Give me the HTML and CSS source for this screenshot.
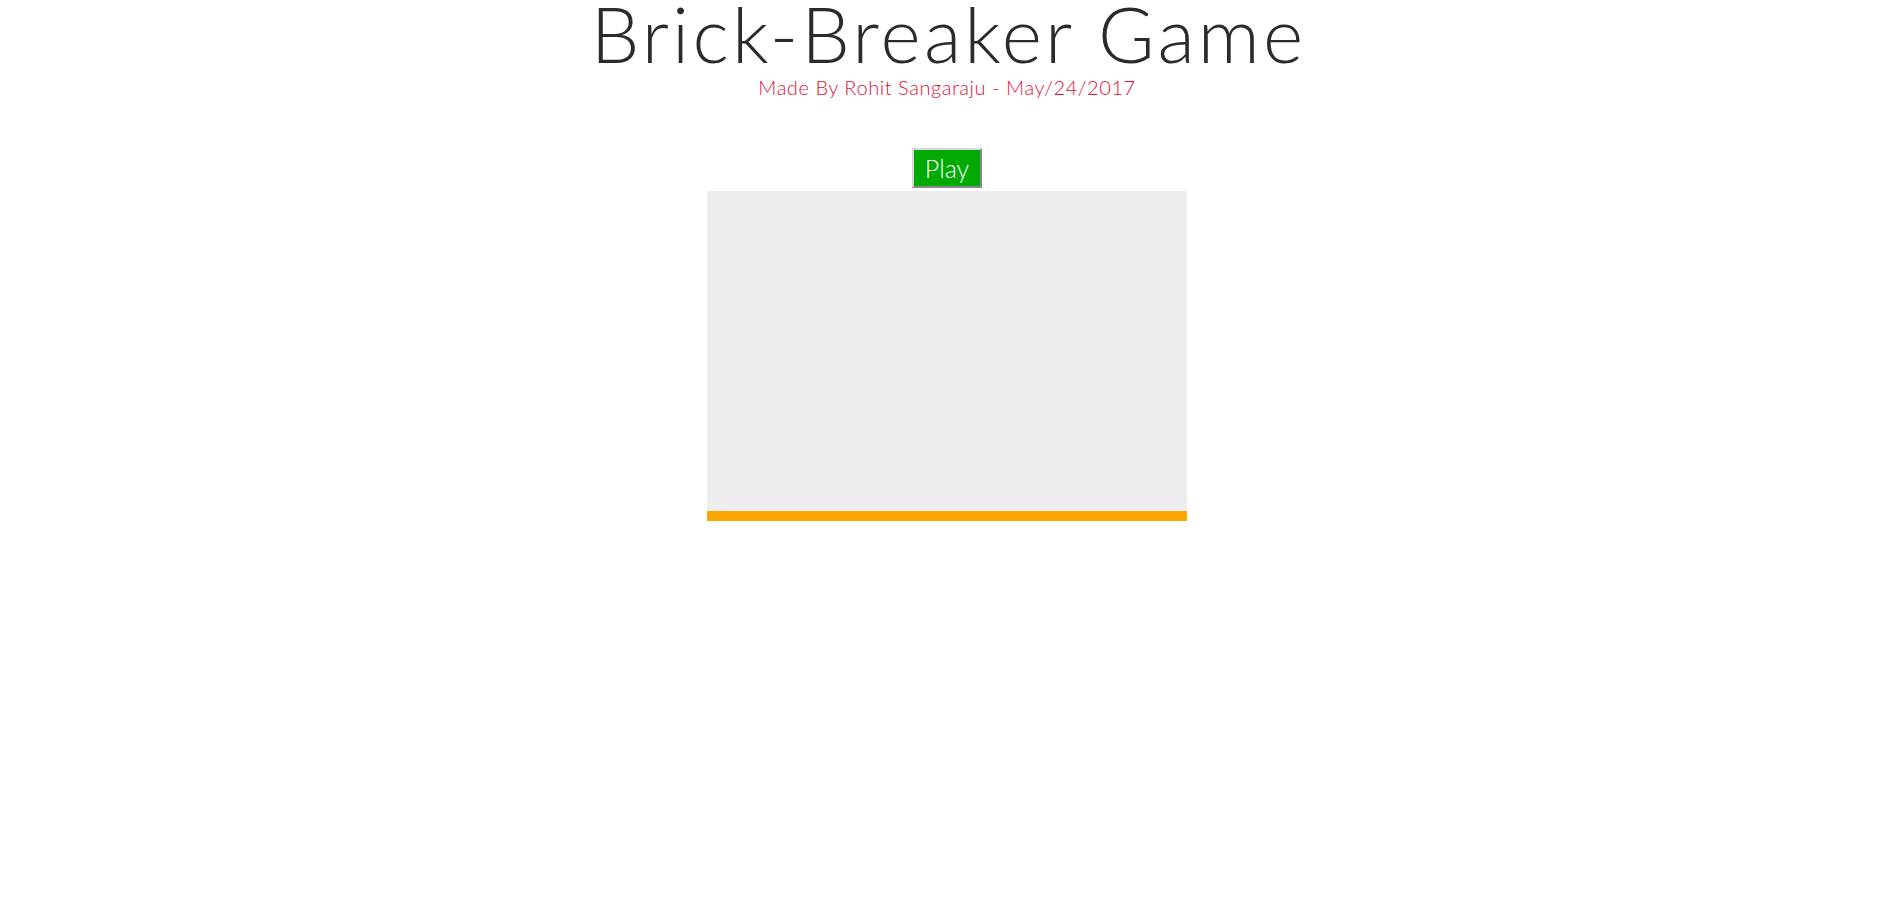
FILE: index.html
```html
<!DOCTYPE html>
<html>
<head>
<meta charset="utf-8">
<title>Brick-Breaker Game</title>
<link rel="stylesheet" href="styles.css">
</head>
<body>
<header class="header">
  <h1 class="title">Brick-Breaker Game</h1>
  <p class="subtitle">Made By Rohit Sangaraju - May/24/2017</p>
</header>
<main class="game">
  <button class="play-btn">Play</button>
  <div class="board">
    <div class="field"></div>
    <div class="paddle"></div>
  </div>
</main>
</body>
</html>
```

FILE: styles.css
```css
html, body {
  margin: 0;
  padding: 0;
  background: #ffffff;
}
body {
  padding-right: 7px;
  font-family: "Lato", "Open Sans", sans-serif;
  font-weight: 300;
  text-align: center;
}
.header {
  display: flex;
  flex-direction: column;
  align-items: center;
}
.title {
  margin: -5px 0 0 0;
  font-size: 77px;
  font-weight: 300;
  line-height: 77px;
  letter-spacing: 3.2px;
  text-indent: 3.2px;
  color: #2b2b2b;
}
.subtitle {
  margin: 3px 0 0 0;
  font-size: 20px;
  line-height: 24px;
  letter-spacing: 0.55px;
  color: #dc1238;
}
.game {
  display: flex;
  flex-direction: column;
  align-items: center;
  margin-top: 49px;
  gap: 3px;
}
.play-btn {
  width: 70px;
  height: 40px;
  padding: 0;
  background: #00aa00;
  color: #ffffff;
  font-family: "Lato", "Open Sans", sans-serif;
  font-weight: 300;
  font-size: 25px;
  border: 2px solid;
  border-color: #d8d8d8 #8a8a8a #8a8a8a #d8d8d8;
}
.board {
  width: 480px;
  display: flex;
  flex-direction: column;
}
.field {
  height: 320px;
  background: #ededed;
}
.paddle {
  height: 10px;
  background: #ffa500;
}
```
